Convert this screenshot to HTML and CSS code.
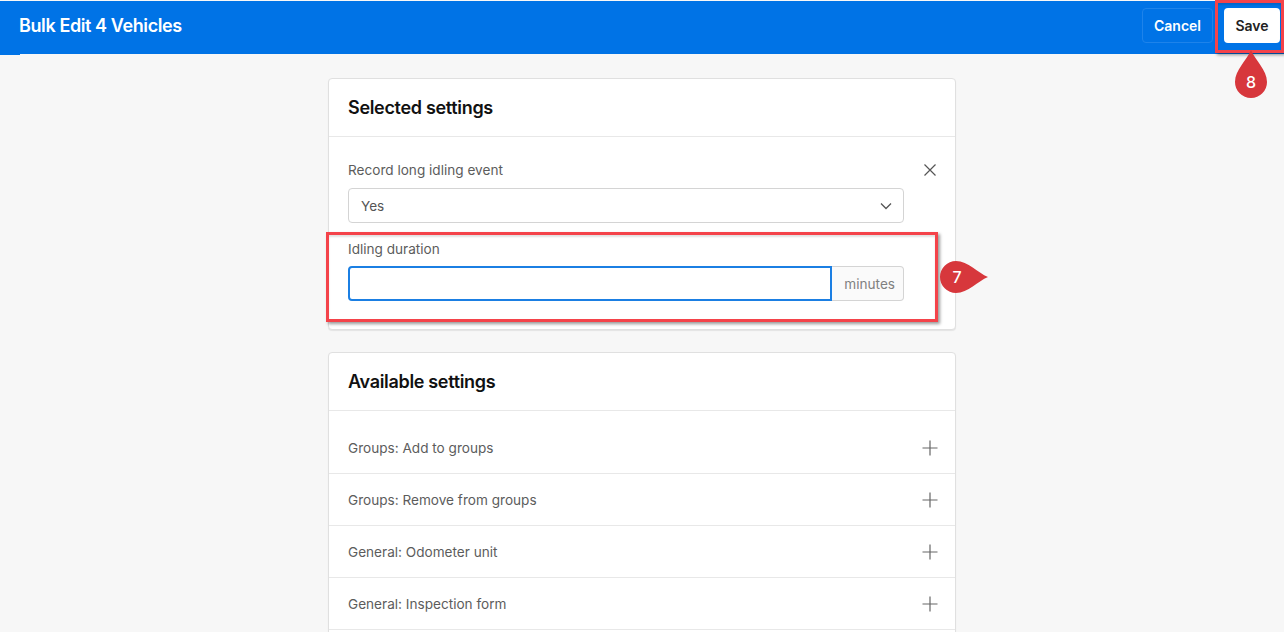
FILE: index.html
```html
<!DOCTYPE html>
<html lang="en">
<head>
<meta charset="utf-8">
<title>Bulk Edit 4 Vehicles</title>
<link rel="stylesheet" href="styles.css">
</head>
<body>
<header class="topbar">
  <h1 class="title">Bulk Edit 4 Vehicles</h1>
  <div class="actions">
    <button class="btn btn-cancel">Cancel</button>
    <button class="btn btn-save">Save</button>
  </div>
</header>
<main class="content">
  <section class="card card-selected">
    <h2 class="card-title">Selected settings</h2>
    <div class="selected-body">
      <div class="fields">
        <label class="label">Record long idling event</label>
        <div class="select">
          <span>Yes</span>
          <svg class="chevron" width="12" height="8" viewBox="0 0 12 8"><path d="M1 1.5l5 5 5-5" fill="none" stroke="#555" stroke-width="1.3"/></svg>
        </div>
        <label class="label label-second">Idling duration</label>
        <div class="input-group">
          <div class="input"></div>
          <div class="addon">minutes</div>
        </div>
      </div>
      <svg class="icon-x" width="14" height="14" viewBox="0 0 14 14"><path d="M1.5 1.5l11 11M12.5 1.5l-11 11" fill="none" stroke="#555" stroke-width="1.2"/></svg>
    </div>
  </section>
  <section class="card card-available">
    <h2 class="card-title">Available settings</h2>
    <div class="rows">
      <div class="row row-first"><span>Groups: Add to groups</span><svg class="icon-plus" width="16" height="16" viewBox="0 0 16 16"><path d="M8 .5v15M.5 8h15" fill="none" stroke="#666" stroke-width="1.2"/></svg></div>
      <div class="row"><span>Groups: Remove from groups</span><svg class="icon-plus" width="16" height="16" viewBox="0 0 16 16"><path d="M8 .5v15M.5 8h15" fill="none" stroke="#666" stroke-width="1.2"/></svg></div>
      <div class="row"><span>General: Odometer unit</span><svg class="icon-plus" width="16" height="16" viewBox="0 0 16 16"><path d="M8 .5v15M.5 8h15" fill="none" stroke="#666" stroke-width="1.2"/></svg></div>
      <div class="row"><span>General: Inspection form</span><svg class="icon-plus" width="16" height="16" viewBox="0 0 16 16"><path d="M8 .5v15M.5 8h15" fill="none" stroke="#666" stroke-width="1.2"/></svg></div>
    </div>
  </section>
</main>
<div class="callout callout-save"></div>
<div class="callout callout-field"></div>
<svg class="pin pin-8" width="34" height="50" viewBox="0 0 34 50"><path d="M17 1C21 11 33 21 33 33A16 16 0 0 1 1 33C1 21 13 11 17 1Z" fill="#d7373c"/><text x="17" y="39" text-anchor="middle" class="pin-text">8</text></svg>
<svg class="pin pin-7" width="50" height="34" viewBox="0 0 50 34"><path d="M49 17C39 21 29 33 17 33A16 16 0 0 1 17 1C29 1 39 13 49 17Z" fill="#d7373c"/><text x="18" y="23" text-anchor="middle" class="pin-text">7</text></svg>
</body>
</html>
```
FILE: styles.css
```css
* { box-sizing: border-box; }
html, body { margin: 0; height: 632px; overflow: hidden; }
body { background: #f7f7f7; font-family: Inter, "Liberation Sans", sans-serif; color: #555; position: relative; }
.topbar { height: 53px; margin-top: 1px; background: #0073e6; display: flex; align-items: center; justify-content: space-between; padding: 0 4px 4px 19px; position: relative; }
.topbar::after { content: ""; position: absolute; left: 0; bottom: -1px; width: 20px; height: 1px; background: #0073e6; }
.title { margin: 0; font-size: 18px; font-weight: 600; color: #fff; letter-spacing: -0.4px; }
.actions { display: flex; gap: 11px; }
.btn { height: 35px; border-radius: 4px; font: 600 14px Inter, "Liberation Sans", sans-serif; padding: 0; }
.btn-cancel { width: 71px; background: transparent; border: 1px solid #1e83ea; color: #fff; }
.btn-save { width: 56px; background: #fff; border: 0; color: #222; }
.content { width: 628px; margin: 24px 0 0 328px; display: flex; flex-direction: column; gap: 22px; }
.card { background: #fff; border: 1px solid #e0e0e0; border-radius: 4px; box-shadow: 0 1px 1px rgba(0,0,0,.08); }
.card-selected { height: 252px; }
.card-title { margin: 0; height: 58px; padding: 0 19px; display: flex; align-items: center; font-size: 18px; font-weight: 600; color: #111; letter-spacing: -0.32px; border-bottom: 1px solid #e8e8e8; }
.selected-body { display: flex; justify-content: space-between; align-items: flex-start; padding: 25px 19px 0; }
.fields { width: 556px; }
.label { display: block; font-size: 13.6px; line-height: 17px; color: #5c5c5c; }
.label-second { margin-top: 18px; }
.select { margin-top: 9px; height: 35px; border: 1px solid #d4d4d4; border-radius: 4px; display: flex; align-items: center; justify-content: space-between; padding: 0 12px; font-size: 13.6px; color: #555; }
.chevron { margin-right: -1px; }
.input-group { margin-top: 8px; height: 35px; display: flex; }
.input { flex: 1; border: 2px solid #1b7fe3; border-radius: 4px 0 0 4px; }
.addon { width: 72px; border: 1px solid #d4d4d4; border-left: 0; border-radius: 0 4px 4px 0; background: #fafafa; color: #808080; font-size: 13.6px; display: flex; align-items: center; justify-content: flex-end; padding-right: 8px; }
.icon-x { margin: 1px -1px 0 0; }
.card-available { height: 320px; }
.rows { padding-top: 11px; }
.row { height: 52px; display: flex; align-items: center; justify-content: space-between; padding: 1px 17px 0 19px; font-size: 13.6px; color: #5c5c5c; border-bottom: 1px solid #e8e8e8; }
.callout { position: absolute; border: 3px solid #f4434a; box-shadow: 2px 2px 3px rgba(0,0,0,.4), inset 0 2px 2px rgba(0,0,0,.12); }
.callout-save { left: 1215px; top: 0; width: 69px; height: 53px; }
.callout-field { left: 326px; top: 232px; width: 612px; height: 90px; }
.pin { position: absolute; }
.pin-8 { left: 1234px; top: 49px; }
.pin-7 { left: 939px; top: 260px; }
.pin-text { font: 500 16px Inter, "Liberation Sans", sans-serif; fill: #fff; }
```
